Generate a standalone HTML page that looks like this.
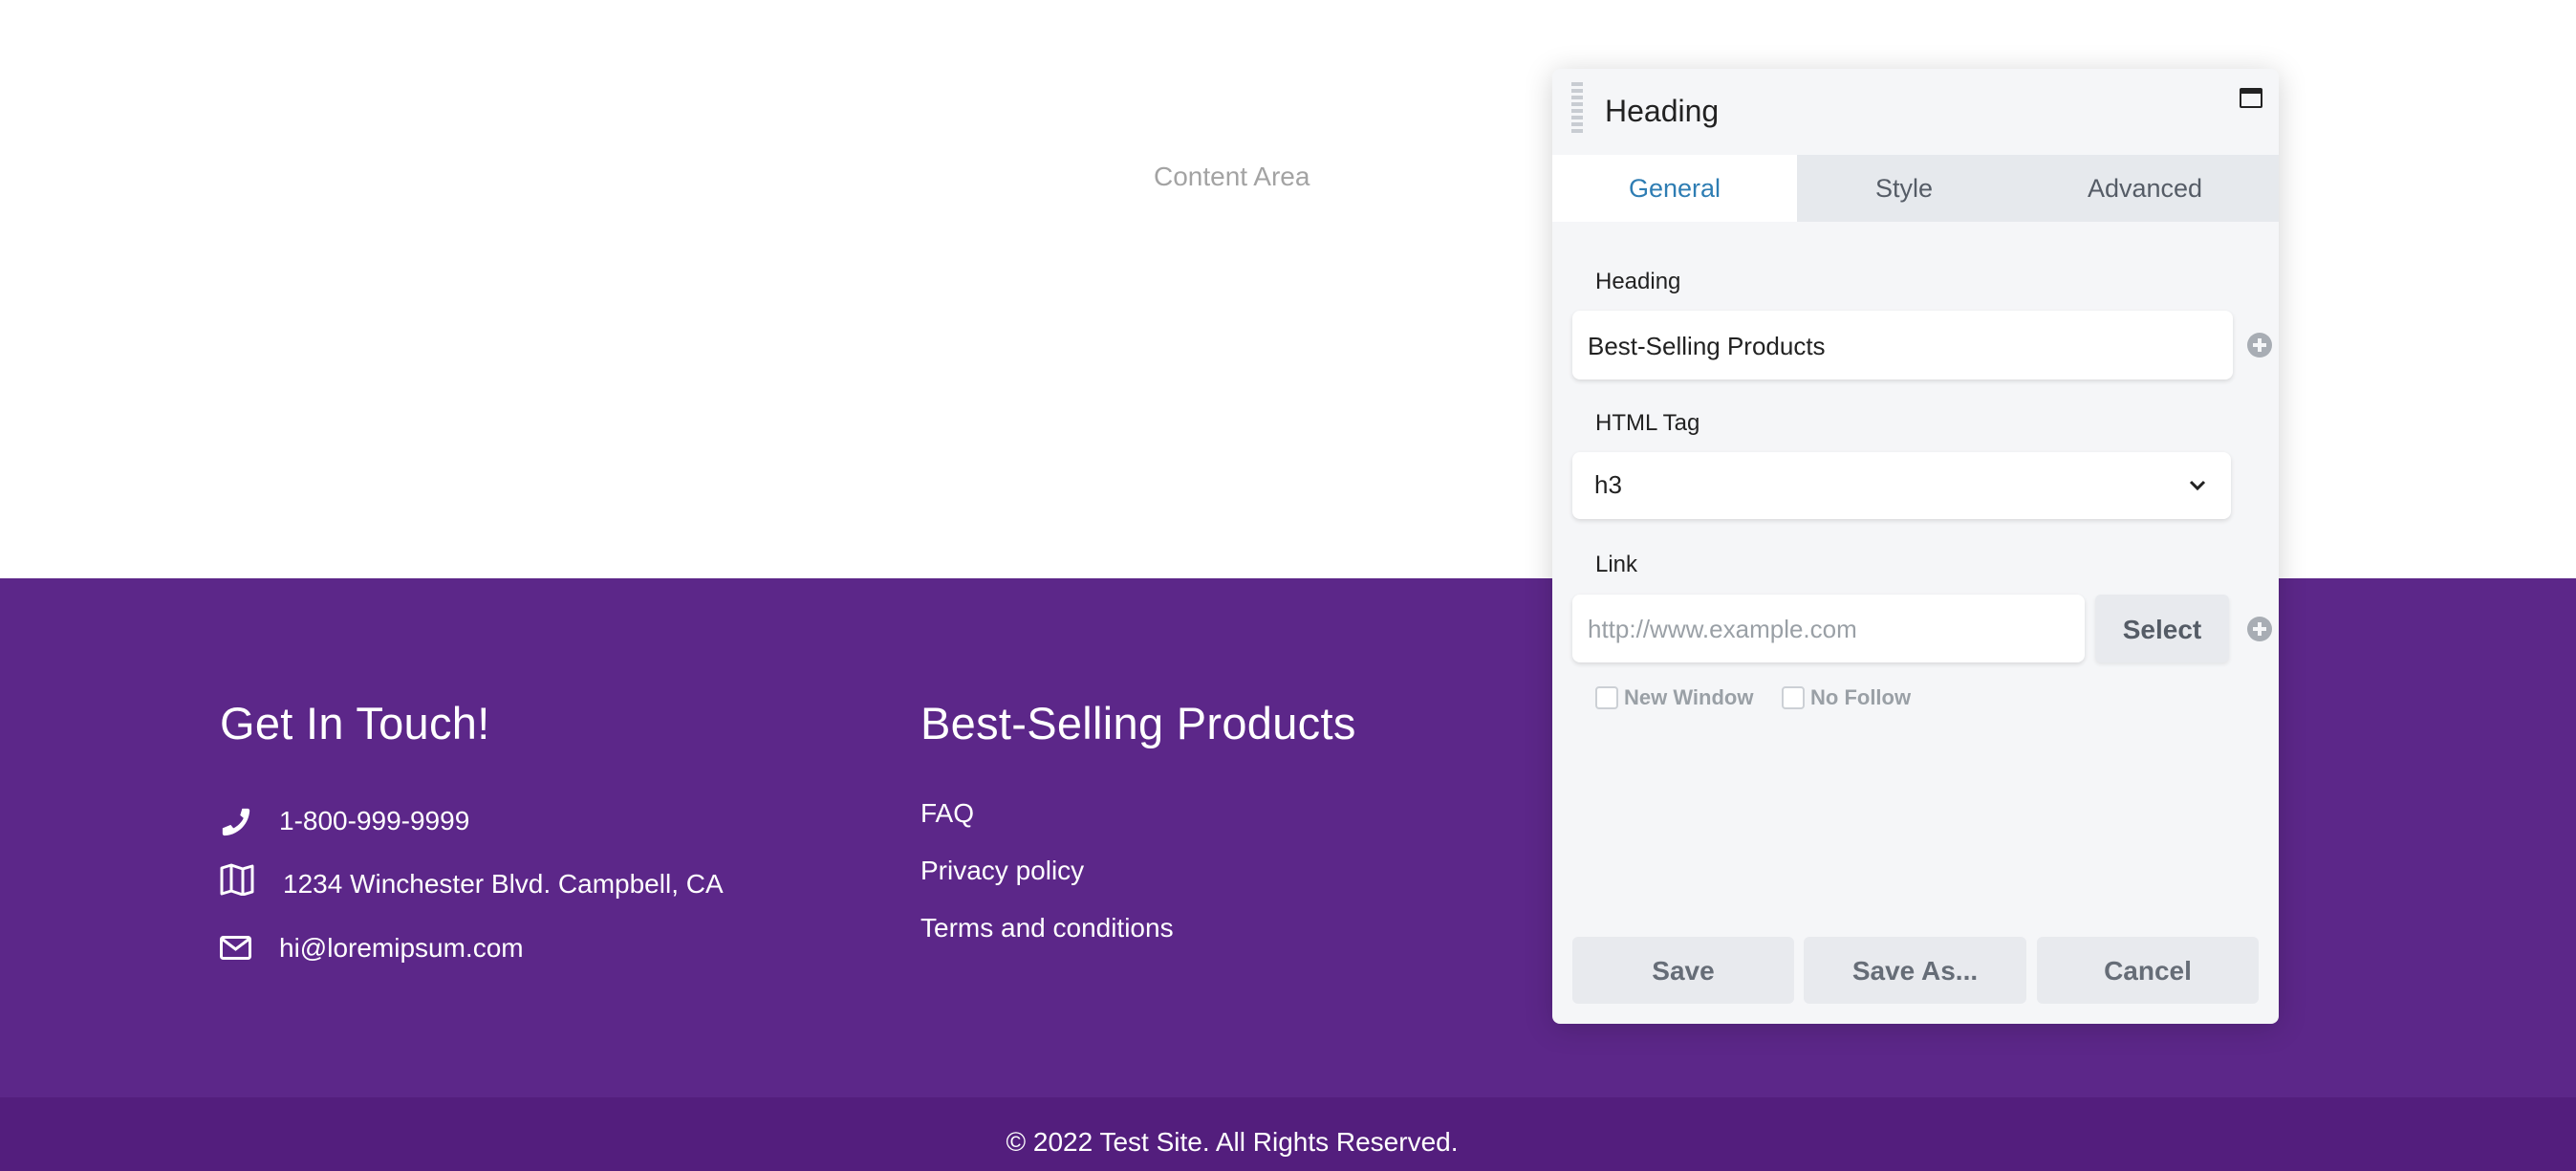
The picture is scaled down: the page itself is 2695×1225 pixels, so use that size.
<!DOCTYPE html>
<html><head><meta charset="utf-8"><style>
*{box-sizing:border-box;margin:0;padding:0}
body{width:2695px;height:1225px;position:relative;overflow:hidden;background:#fff;font-family:"Liberation Sans",sans-serif}
.a{position:absolute;white-space:nowrap}
.foot{position:absolute;left:0;top:605px;width:2695px;height:543px;background:#5c2789}
.bar{position:absolute;left:0;top:1148px;width:2695px;height:77px;background:#531e7d}
.w{color:#fff}
.panel{position:absolute;left:1624px;top:72px;width:760px;height:999px;background:#f5f6f8;border-radius:8px;box-shadow:0 4px 30px rgba(0,0,0,.18);overflow:hidden}
.lbl{position:absolute;font-size:24px;color:#222}
.inp{position:absolute;background:#fff;border-radius:8px;box-shadow:0 2px 5px rgba(0,0,0,.12);font-size:26px;color:#222}
.btn{position:absolute;top:908px;height:70px;background:#e8eaee;border-radius:6px;font-size:28px;font-weight:bold;color:#666d77;text-align:center;line-height:72px}
.cb{position:absolute;top:646px;width:24px;height:24px;border:2px solid #ccd0d5;border-radius:4px;background:#fff}
.cbt{position:absolute;top:645px;font-size:22px;font-weight:bold;color:#9aa0a6}
.plus{position:absolute;width:26px;height:26px;border-radius:50%;background:#a8adb4}
.plus:before{content:"";position:absolute;left:6px;top:11px;width:14px;height:4px;background:#f5f6f8}
.plus:after{content:"";position:absolute;left:11px;top:6px;width:4px;height:14px;background:#f5f6f8}
</style></head><body>
<div class="a" style="left:1207px;top:169px;font-size:28px;color:#a3a3a3">Content Area</div>
<div class="foot"></div><div class="bar"></div>
<div class="a w" style="left:230px;top:729px;font-size:47px;letter-spacing:0.3px">Get In Touch!</div>
<div class="a w" style="left:963px;top:729px;font-size:47px;letter-spacing:0.3px">Best-Selling Products</div>
<svg class="a" style="left:230px;top:843px" width="34" height="34" viewBox="0 0 24 24"><path fill="#fff" d="M22 16.5v4a1.5 1.5 0 0 1-1.6 1.5C10.5 21.4 2.6 13.5 2 3.6A1.5 1.5 0 0 1 3.5 2h4l1.5 5-2.5 2c1.3 3 4.5 6.2 7.5 7.5l2-2.5z" transform="translate(24 0) scale(-1 1)"/></svg>
<svg class="a" style="left:230px;top:903px" width="36" height="34" viewBox="0 0 36 34"><path fill="none" stroke="#fff" stroke-width="3" stroke-linejoin="round" d="M2 5l10 -3 12 4 10 -3v27l-10 3-12-4-10 3z M12 2v27 M24 6v27"/></svg>
<svg class="a" style="left:230px;top:979px" width="33" height="25" viewBox="0 0 33 25"><rect x="1.5" y="1.5" width="30" height="22" rx="2" fill="none" stroke="#fff" stroke-width="3"/><path d="M2 3l14.5 11L31 3" fill="none" stroke="#fff" stroke-width="3"/></svg>
<div class="a w" style="left:292px;top:843px;font-size:28px">1-800-999-9999</div>
<div class="a w" style="left:296px;top:909px;font-size:28px">1234 Winchester Blvd. Campbell, CA</div>
<div class="a w" style="left:292px;top:976px;font-size:28px">hi@loremipsum.com</div>
<div class="a w" style="left:963px;top:835px;font-size:28px">FAQ</div>
<div class="a w" style="left:963px;top:895px;font-size:28px">Privacy policy</div>
<div class="a w" style="left:963px;top:955px;font-size:28px">Terms and conditions</div>
<div class="a w" style="left:0;width:2578px;text-align:center;top:1179px;font-size:28px">© 2022 Test Site. All Rights Reserved.</div>
<div class="panel">
 <div style="position:absolute;left:20px;top:14px;width:12px;height:54px;background:repeating-linear-gradient(#c8ccd2 0 4px,transparent 4px 7px)"></div>
 <div class="a" style="left:55px;top:26px;font-size:32px;color:#222">Heading</div>
 <div style="position:absolute;left:719px;top:20px;width:24px;height:21px;border:2px solid #222;border-top-width:6px;border-radius:2px"></div>
 <div style="position:absolute;left:0;top:90px;width:760px;height:70px;background:#e6e9ed"></div>
 <div style="position:absolute;left:0;top:90px;width:256px;height:70px;background:#fff"></div>
 <div class="a" style="left:0;width:256px;text-align:center;top:110px;font-size:27px;color:#2e7db3">General</div>
 <div class="a" style="left:248px;width:240px;text-align:center;top:110px;font-size:27px;color:#555c66">Style</div>
 <div class="a" style="left:488px;width:264px;text-align:center;top:110px;font-size:27px;color:#555c66">Advanced</div>
 <div class="lbl" style="left:45px;top:209px">Heading</div>
 <div class="inp" style="left:21px;top:253px;width:691px;height:72px;padding:22px 16px">Best-Selling Products</div>
 <div class="plus" style="left:727px;top:276px"></div>
 <div class="lbl" style="left:45px;top:357px">HTML Tag</div>
 <div class="inp" style="left:21px;top:401px;width:689px;height:70px;padding:19px 23px">h3</div>
 <svg class="a" style="left:666px;top:430px" width="18" height="12" viewBox="0 0 18 12"><path d="M2 2l7 7 7-7" fill="none" stroke="#222" stroke-width="3"/></svg>
 <div class="lbl" style="left:45px;top:505px">Link</div>
 <div class="inp" style="left:21px;top:550px;width:536px;height:71px;padding:21px 16px;color:#9aa0a6">http://www.example.com</div>
 <div style="position:absolute;left:568px;top:550px;width:140px;height:71px;background:#e8eaee;border-radius:6px;box-shadow:0 2px 4px rgba(0,0,0,.08);font-size:28px;font-weight:bold;color:#555c66;text-align:center;line-height:74px">Select</div>
 <div class="plus" style="left:727px;top:573px"></div>
 <div class="cb" style="left:45px"></div><div class="cbt" style="left:75px">New Window</div>
 <div class="cb" style="left:240px"></div><div class="cbt" style="left:270px">No Follow</div>
 <div class="btn" style="left:21px;width:232px">Save</div>
 <div class="btn" style="left:263px;width:233px">Save As...</div>
 <div class="btn" style="left:507px;width:232px">Cancel</div>
</div>
</body></html>
